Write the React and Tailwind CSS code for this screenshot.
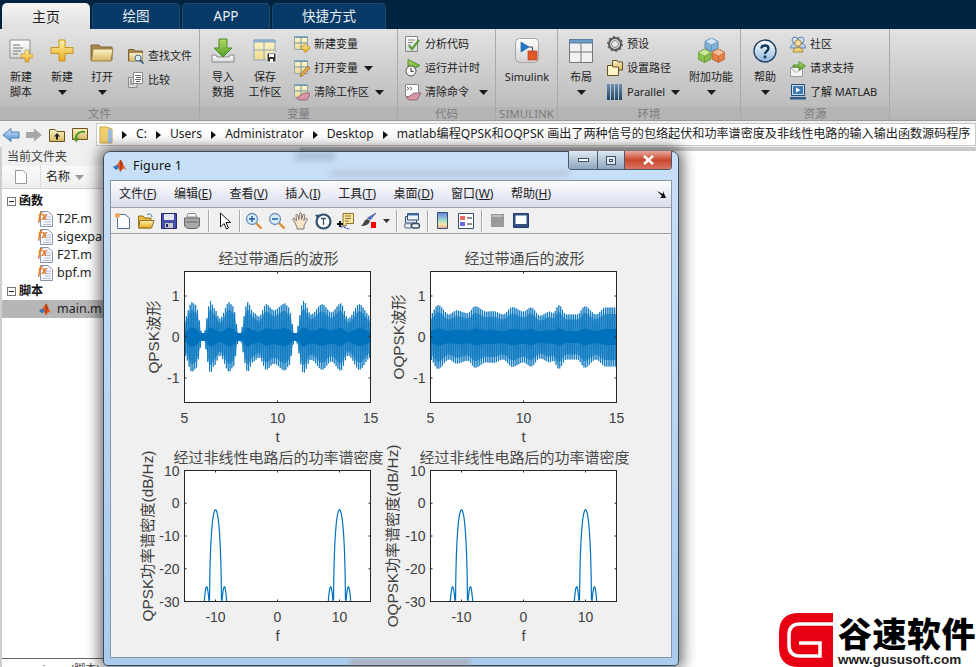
import React from "react";

// shared bits of the MATLAB desktop
const Caret = ({ className = "" }) => (
  <svg width="9" height="5" viewBox="0 0 9 5" className={className}><path d="M0 0H9L4.5 5Z" fill="#1a1a1a" /></svg>
);

const Crumb = () => (
  <svg width="5" height="8" viewBox="0 0 5 8" className="mx-[9px] shrink-0"><path d="M0 0L5 4L0 8Z" fill="#111" /></svg>
);

const Grad = ({ id, a, b }) => (
  <linearGradient id={id} x1="0" y1="0" x2="0" y2="1"><stop offset="0" stopColor={a} /><stop offset="1" stopColor={b} /></linearGradient>
);

const Defs = () => (
  <svg width="0" height="0" className="absolute">
    <defs>
      <Grad id="gYellow" a="#fff3a8" b="#eaa81f" />
      <Grad id="gFolder" a="#fdf3c4" b="#d9b765" />
      <Grad id="gPage" a="#ffffff" b="#d5d8dc" />
      <Grad id="gGreen" a="#b6dd62" b="#4f9a28" />
      <Grad id="gBlue" a="#cfe3fa" b="#4f8fd0" />
      <Grad id="gTile" a="#ffffff" b="#d2d2d2" />
      <Grad id="gCell" a="#fff6c9" b="#f1dc8c" />
      <Grad id="gHelp" a="#ffffff" b="#8fb7dc" />
      <Grad id="gBars" a="#6f8fb0" b="#1f4468" />
    </defs>
  </svg>
);

const NewScript = () => (
  <svg width="24" height="24" viewBox="0 0 24 24">
    <path d="M1 1H21V19H1Z" fill="url(#gPage)" stroke="#8d8d8d" />
    <path d="M4 6H11M4 9H14M4 12H12M4 15H9" stroke="#777" />
    <path d="M16 11H20V15H24V19H20V23H16V19H12V15H16Z" fill="url(#gYellow)" stroke="#b98a1a" strokeWidth=".6" />
  </svg>
);
const BigPlus = () => (
  <svg width="24" height="24" viewBox="0 0 24 24">
    <path d="M9 1H15V8.500H23V14.500H15V22H9V14.500H1V8.500H9Z" fill="url(#gYellow)" stroke="#c79518" />
  </svg>
);
const BigFolder = () => (
  <svg width="24" height="20" viewBox="0 0 24 20">
    <path d="M1 2H9L11 4H22V17H1Z" fill="#a8864f" stroke="#7d6536" />
    <path d="M3 6H23L21 18H1.500Z" fill="url(#gFolder)" stroke="#9b8146" />
  </svg>
);
const FindFile = () => (
  <svg width="16" height="16" viewBox="0 0 16 16">
    <path d="M.500 1.500H6L7.500 3H14.500V13H.500Z" fill="#a8864f" stroke="#7d6536" />
    <path d="M1.500 5H14.500V13H1.500Z" fill="url(#gFolder)" />
    <circle cx="10" cy="10" r="3" fill="#dcecf9" stroke="#3c6f9c" />
    <path d="M12 12L15.500 15.500" stroke="#1f4d78" strokeWidth="1.500" />
  </svg>
);
const Compare = () => (
  <svg width="16" height="16" viewBox="0 0 16 16">
    <path d="M.500 5.500H9V15.500H.500Z" fill="#ddd" stroke="#888" />
    <path d="M5.500.500H14.500V11.500H5.500Z" fill="#fff" stroke="#888" />
    <path d="M7 3.500H13M8 5.500H13M7 7.500H13M8 9.500H12M2 8H4M2 10H4M2 12H6" stroke="#666" />
  </svg>
);
const ImportData = () => (
  <svg width="24" height="25" viewBox="0 0 24 25">
    <path d="M1 17H5L6 19H18L19 17H23V24H1Z" fill="url(#gPage)" stroke="#888" />
    <path d="M8 1H16V10H21L12 19L3 10H8Z" fill="url(#gGreen)" stroke="#4a8a2a" />
  </svg>
);
const SaveWs = () => (
  <svg width="24" height="24" viewBox="0 0 24 24">
    <path d="M1 1H22V21H1Z" fill="url(#gCell)" stroke="#8aa8c0" />
    <path d="M1 1H22V3H1ZM11 1V21M1 11H22" stroke="#8aa8c0" fill="#8fb4d4" />
    <path d="M14 14H23V23H14Z" fill="#333" stroke="#f5f5f5" />
    <path d="M16 15H21V18H16ZM17 20H20V23H17Z" fill="#fff" />
  </svg>
);
const VarGrid = ({ children }) => (
  <svg width="16" height="17" viewBox="0 0 16 17">
    <path d="M.500.500H13.500V13.500H.500Z" fill="url(#gCell)" stroke="#8aa8c0" />
    <path d="M.500 1.500H13.500M7 .500V13.500M.500 7H13.500" stroke="#6c93b5" />
    {children}
  </svg>
);
const NewVar = () => (
  <VarGrid><path d="M10 8H13V10.500H15.500V13.500H13V16H10V13.500H7.500V10.500H10Z" fill="url(#gYellow)" stroke="#b98a1a" strokeWidth=".6" /></VarGrid>
);
const OpenVar = () => (
  <VarGrid><path d="M14 6L16 8L9 15.500L6 16.500L7 13.500Z" fill="#e8a94a" stroke="#8a5a20" strokeWidth=".7" /></VarGrid>
);
const Eraser = () => <path d="M9 7H16L12 14H4L1.500 12Z" fill="#d994a6" stroke="#8b5a68" strokeWidth=".8" />;
const ClearWs = () => (
  <VarGrid><g transform="translate(1 2)"><Eraser /></g></VarGrid>
);
const Analyze = () => (
  <svg width="16" height="17" viewBox="0 0 16 17">
    <path d="M.500.500H12.500V15.500H.500Z" fill="url(#gPage)" stroke="#888" />
    <path d="M3 4H10M3 6.500H8M3 9H6" stroke="#888" />
    <path d="M4 10L7 13L14 4" fill="none" stroke="#5a9e36" strokeWidth="2.200" />
  </svg>
);
const RunTime = () => (
  <svg width="16" height="18" viewBox="0 0 16 18">
    <path d="M3 .500L15 6.500L3 12.500Z" fill="url(#gGreen)" stroke="#4a8a2a" />
    <circle cx="6" cy="12" r="5" fill="#f5f5f5" stroke="#555" />
    <path d="M6 9V12.500H8.500" fill="none" stroke="#333" />
  </svg>
);
const ClearCmd = () => (
  <svg width="16" height="17" viewBox="0 0 16 17">
    <path d="M.500.500H13.500V12.500H.500Z" fill="#fff" stroke="#888" />
    <path d="M2 3L4 4.500L2 6M5 3L7 4.500L5 6" fill="none" stroke="#333" strokeWidth=".8" />
    <g transform="translate(0 2)"><Eraser /></g>
  </svg>
);
const SimulinkIcon = () => (
  <svg width="24" height="25" viewBox="0 0 24 25">
    <rect x=".500" y=".500" width="23" height="24" rx="4" fill="url(#gTile)" stroke="#a5a5a5" />
    <path d="M6 4L14 9L6 14Z" fill="#1f78c8" stroke="#175a96" strokeWidth=".6" />
    <path d="M14 9H17.500V13" fill="none" stroke="#444" />
    <rect x="13" y="13" width="9" height="9" fill="#e2572a" stroke="#a83b18" strokeWidth=".6" />
  </svg>
);
const LayoutIcon = () => (
  <svg width="24" height="24" viewBox="0 0 24 24">
    <path d="M.500.500H23.500V23.500H.500Z" fill="#f2f2f2" stroke="#777" />
    <path d="M.500.500H23.500V4H.500Z" fill="#6d9cc6" stroke="#5a7f9f" />
    <path d="M12 4V23.500M.500 13H23.500" stroke="#777" />
  </svg>
);
const Gear = () => (
  <svg width="16" height="16" viewBox="0 0 16 16">
    <circle cx="8" cy="8" r="6" fill="none" stroke="#555" strokeWidth="2" />
    <circle cx="8" cy="8" r="7" fill="none" stroke="#666" strokeWidth="2" strokeDasharray="2 2.400" />
    <circle cx="8" cy="8" r="3.500" fill="#e8e8e8" stroke="#888" />
  </svg>
);
const PathFolder = () => (
  <svg width="16" height="16" viewBox="0 0 16 16">
    <path d="M5.500.500H10L11 2H15.500V10H5.500Z" fill="url(#gFolder)" stroke="#6a5520" />
    <path d="M.500 5.500H5L6 7H11.500V15.500H.500Z" fill="#fff6cc" stroke="#6a5520" />
  </svg>
);
const ParallelIcon = () => (
  <svg width="16" height="16" viewBox="0 0 16 16">
    <path d="M0 0H3V16H0ZM4 0H7V16H4ZM8 0H11V16H8ZM12 0H15V16H12Z" fill="url(#gBars)" />
  </svg>
);
const Cube = ({ x, y, top, side, dark }) => (
  <g transform={`translate(${x} ${y})`}>
    <path d="M6.500 0L13 3.500V10L6.500 13.500L0 10V3.500Z" fill={side} stroke={dark} strokeWidth=".8" />
    <path d="M6.500 0L13 3.500L6.500 7L0 3.500Z" fill={top} stroke={dark} strokeWidth=".5" />
    <path d="M6.500 7V13.500" stroke={dark} strokeWidth=".5" />
  </g>
);
const Cubes = () => (
  <svg width="27" height="25" viewBox="0 0 27 25">
    <Cube x="7" y="0" top="#cfe4f5" side="#7fb2d9" dark="#4b7fa8" />
    <Cube x="0" y="11" top="#cde89a" side="#86c04a" dark="#5a8a2a" />
    <Cube x="14" y="11" top="#f6bd9a" side="#e57f45" dark="#b05a28" />
  </svg>
);
const HelpIcon = () => (
  <svg width="24" height="24" viewBox="0 0 24 24">
    <circle cx="12" cy="12" r="11" fill="url(#gHelp)" stroke="#1e3f60" strokeWidth="1.300" />
    <path d="M8.500 9.500C8.500 5.500 15.500 5.500 15.500 9.500C15.500 12 12 12 12 15" fill="none" stroke="#143a5e" strokeWidth="2.400" />
    <rect x="10.700" y="16.500" width="2.600" height="2.800" fill="#143a5e" />
  </svg>
);
const Community = () => (
  <svg width="16" height="17" viewBox="0 0 16 17">
    <circle cx="5" cy="4" r="3" fill="#cfe0f3" stroke="#5d84ad" />
    <circle cx="11" cy="4" r="3" fill="#cfe0f3" stroke="#5d84ad" />
    <path d="M.500 12C.500 7 7 7 7 8L7 12ZM9 8C11 7 15.500 7 15.500 12H9Z" fill="#b8d0ea" stroke="#5d84ad" />
    <circle cx="8" cy="7" r="3.200" fill="#f4dfa4" stroke="#a88b3a" />
    <path d="M3 16C3 10 13 10 13 16Z" fill="#f0d27a" stroke="#a88b3a" />
  </svg>
);
const Request = () => (
  <svg width="16" height="17" viewBox="0 0 16 17">
    <path d="M.500 7.500H12.500V16.500H.500Z" fill="#f4f4f4" stroke="#999" />
    <path d="M.500 7.500L6.500 12.500L12.500 7.500" fill="none" stroke="#aaa" />
    <path d="M3 7V5H9V1.500L15.500 6L9 10.500V7Z" fill="url(#gGreen)" stroke="#4a8a2a" strokeWidth=".8" />
  </svg>
);
const Learn = () => (
  <svg width="16" height="16" viewBox="0 0 16 16">
    <path d="M1.500.500H14.500V11.500H1.500Z" fill="#cfe0f1" stroke="#1f4d78" />
    <path d="M3 2H13V10H3Z" fill="#3d78b0" />
    <path d="M6 3.500L10.500 6L6 8.500Z" fill="#fff" />
    <path d="M0 13H16V15.500H0Z" fill="#2b5f90" />
  </svg>
);

const BigBtn = ({ w, icon, lines = [], caret }) => (
  <div className={`${w} shrink-0 flex flex-col items-center pt-2`}>
    <div className="h-[26px] flex items-end justify-center">{icon}</div>
    <div className="mt-[6px] flex flex-col items-center text-[11px] leading-[15px] text-[#222] whitespace-nowrap">
      {lines.map((l) => <div key={l}>{l}</div>)}
      {caret && <div className="h-[16px] flex items-center"><Caret /></div>}
    </div>
  </div>
);

const SmallBtn = ({ icon, label, caret, gap = "ml-[6px]", w = "w-[16px]" }) => (
  <div className="h-6 flex items-center whitespace-nowrap text-[11px] text-[#222]">
    <div className={`${w} flex justify-center shrink-0`}>{icon}</div>
    <span className="ml-1">{label}</span>
    {caret && <Caret className={gap} />}
  </div>
);

const Group = ({ w, label, children }) => (
  <div className={`${w} shrink-0 flex flex-col border-r border-[#a9a9a9]`}>
    <div className="h-[78px] flex">{children}</div>
    <div className="h-[13px] bg-[#b5b5b5] flex items-center justify-center text-[11.5px] leading-[13px] text-[#7c7c7c]">{label}</div>
  </div>
);

const Tab = ({ w, label, active }) => (
  <div className={active
    ? `${w} h-[26px] rounded-t-[5px] bg-gradient-to-b from-[#f4f4f4] to-[#dfdfdf] text-[#222] flex items-center justify-center text-[14px]`
    : `${w} h-[26px] rounded-t-[5px] border border-b-0 border-[#1d4d77] bg-[#073a66] text-[#e8eef4] flex items-center justify-center text-[13.500px]`}>
    {label}
  </div>
);

const Ribbon = () => (
  <>
    <div className="h-[29px] shrink-0 bg-[#00233f] flex items-end pl-[2px] gap-[2px]">
      <Tab w="w-[88px]" label="主页" active />
      <Tab w="w-[88px]" label="绘图" />
      <Tab w="w-[88px]" label="APP" />
      <Tab w="w-[114px]" label="快捷方式" />
    </div>
    <div className="h-[92px] shrink-0 flex bg-gradient-to-b from-[#e2e2e2] to-[#b6b6b6] border-b border-[#9a9a9a]">
      <Group w="w-[200px]" label="文件">
        <BigBtn w="w-[42px]" icon={<NewScript />} lines={["新建", "脚本"]} />
        <BigBtn w="w-[40px]" icon={<BigPlus />} lines={["新建"]} caret />
        <BigBtn w="w-[40px]" icon={<BigFolder />} lines={["打开"]} caret />
        <div className="ml-[6px] pt-[15px]">
          <SmallBtn icon={<FindFile />} label="查找文件" />
          <SmallBtn icon={<Compare />} label="比较" />
        </div>
      </Group>
      <Group w="w-[198px]" label="变量">
        <BigBtn w="w-[46px]" icon={<ImportData />} lines={["导入", "数据"]} />
        <BigBtn w="w-[38px]" icon={<SaveWs />} lines={["保存", "工作区"]} />
        <div className="ml-[10px] pt-[3px]">
          <SmallBtn icon={<NewVar />} label="新建变量" />
          <SmallBtn icon={<OpenVar />} label="打开变量" caret />
          <SmallBtn icon={<ClearWs />} label="清除工作区" caret />
        </div>
      </Group>
      <Group w="w-[98px]" label="代码">
        <div className="ml-[7px] pt-[3px]">
          <SmallBtn icon={<Analyze />} label="分析代码" />
          <SmallBtn icon={<RunTime />} label="运行并计时" />
          <SmallBtn icon={<ClearCmd />} label="清除命令" gap="ml-[10px]" caret />
        </div>
      </Group>
      <Group w="w-[62px]" label="SIMULINK">
        <BigBtn w="w-[62px]" icon={<SimulinkIcon />} lines={["Simulink"]} />
      </Group>
      <Group w="w-[183px]" label="环境">
        <BigBtn w="w-[46px]" icon={<LayoutIcon />} lines={["布局"]} caret />
        <div className="ml-[3px] w-[78px] pt-[3px]">
          <SmallBtn icon={<Gear />} label="预设" />
          <SmallBtn icon={<PathFolder />} label="设置路径" />
          <SmallBtn icon={<ParallelIcon />} label="Parallel" caret />
        </div>
        <BigBtn w="w-[52px]" icon={<Cubes />} lines={["附加功能"]} caret />
      </Group>
      <Group w="w-[149px]" label="资源">
        <BigBtn w="w-[48px]" icon={<HelpIcon />} lines={["帮助"]} caret />
        <div className="ml-[1px] pt-[3px]">
          <SmallBtn icon={<Community />} label="社区" />
          <SmallBtn icon={<Request />} label="请求支持" />
          <SmallBtn icon={<Learn />} label="了解 MATLAB" />
        </div>
      </Group>
    </div>
  </>
);

const AddressBar = () => (
  <div className="h-[26px] shrink-0 bg-[#f0f0f0] flex items-center pt-px">
    <div className="w-[96px] flex items-center shrink-0">
      <svg width="96" height="18" viewBox="0 0 96 18">
        <path d="M3 9L11 2.500V6H19V12H11V15.500Z" fill="url(#gBlue)" stroke="#4f7fb0" />
        <path d="M42 9L34 2.500V6H26V12H34V15.500Z" fill="#a8a8a8" />
        <path d="M49.500 3.500H55L57 5.500H64.500V15.500H49.500Z" fill="url(#gFolder)" stroke="#6a5520" />
        <path d="M57 7L60 10.500H58V13.500H56V10.500H54Z" fill="#222" />
        <path d="M72.500 2.500H87.500V13.500H72.500Z" fill="url(#gFolder)" stroke="#6a5520" />
        <path d="M85 7C81 6 77 8 77 12L79.500 10.500L76.500 16.500L73 12.500L75 12C75 7 80 3.500 85 5Z" fill="#4f9a28" />
      </svg>
    </div>
    <div className="flex-1 h-[23px] bg-white border border-[#c9c9c9] flex items-center text-[12.100px] text-[#222] whitespace-nowrap overflow-hidden pl-[2px]">
      <svg width="14" height="18" viewBox="0 0 14 18" className="shrink-0">
        <path d="M1 1H8L13 3V17H1Z" fill="#f1cf6e" stroke="#c9a441" />
        <path d="M9 2V17H13V4Z" fill="#9dbfe0" />
      </svg>
      <Crumb /><span>C:</span>
      <Crumb /><span>Users</span>
      <Crumb /><span>Administrator</span>
      <Crumb /><span>Desktop</span>
      <Crumb /><span>matlab编程QPSK和OQPSK 画出了两种信号的包络起伏和功率谱密度及非线性电路的输入输出函数源码程序</span>
    </div>
  </div>
);

const FxFile = () => (
  <svg width="15" height="16" viewBox="0 0 15 16">
    <path d="M2.500.500H10L14.500 4.500V15.500H2.500Z" fill="#f6f8fb" stroke="#8a93a8" />
    <path d="M7 6H13M7 8.500H13M7 11H13M5 13.500H13" stroke="#b4bccd" />
    <text x="0" y="9" className="text-[10px] italic font-bold" fill="#e0761d">fx</text>
  </svg>
);

const MatlabLogo = ({ size = 16 }) => (
  <svg width={size} height={size} viewBox="0 0 16 16">
    <path d="M1 9L5 7L8 2C9 1 10 4 11 6C12 9 14 11 15 12C13 11 12 10 11 11L8 14C7 11 6 9 5 8Z" fill="#dc5b1d" />
    <path d="M1 9L5 7L7 10L4 12Z" fill="#2c78c5" />
    <path d="M8 2C9 1 10 4 11 6L8 14C8 9 8 6 8 2Z" fill="#b53a1a" />
  </svg>
);

const TreeHead = ({ label }) => (
  <div className="h-[18px] flex items-center pl-[5px] text-[12px] font-bold text-[#111]">
    <span className="w-[9px] h-[9px] border border-[#777] flex items-center justify-center mr-[3px] bg-white">
      <span className="w-[5px] h-px bg-[#222]" />
    </span>
    {label}
  </div>
);

const TreeFile = ({ label, selected, icon }) => (
  <div className={`h-[18px] flex items-center pl-[36px] text-[12.5px] text-[#222] whitespace-nowrap ${selected ? "bg-[#b6b6b6]" : ""}`}>
    <span className="w-[15px] h-4 flex items-center mr-1">{icon}</span>
    {label}
  </div>
);

const FilePanel = () => (
  <div className="w-[300px] shrink-0 flex flex-col border-l-2 border-[#cfcfcf] overflow-hidden">
    <div className="h-[19px] shrink-0 bg-[#f0f0f0] flex items-center pl-[5px] text-[12px] text-[#444]">当前文件夹</div>
    <div className="h-[23px] shrink-0 bg-gradient-to-b from-[#fafafa] to-[#eeeeee] border-b border-[#d0d0d0] flex items-center text-[12px] text-[#222]">
      <div className="w-[39px] h-full flex items-center justify-center border-r border-[#dcdcdc]">
        <svg width="12" height="14" viewBox="0 0 12 14"><path d="M.500.500H8L11.500 4V13.500H.500Z" fill="#fff" stroke="#999" /></svg>
      </div>
      <span className="ml-[5px]">名称</span>
      <svg width="9" height="5" viewBox="0 0 9 5" className="ml-[5px]"><path d="M0 0H9L4.500 5Z" fill="#999" /></svg>
    </div>
    <div className="flex-1 bg-white pt-[3px]">
      <TreeHead label="函数" />
      <TreeFile label="T2F.m" icon={<FxFile />} />
      <TreeFile label="sigexpa" icon={<FxFile />} />
      <TreeFile label="F2T.m" icon={<FxFile />} />
      <TreeFile label="bpf.m" icon={<FxFile />} />
      <TreeHead label="脚本" />
      <TreeFile label="main.m" selected icon={<MatlabLogo size={15} />} />
    </div>
    <div className="h-[9px] shrink-0 border-t border-[#666] bg-white text-[11px] leading-[14px] pl-[24px] pt-[3px] text-[#444] whitespace-pre overflow-hidden">main.m  (脚本)</div>
  </div>
);

// signal data for the two waveforms, envelope knots read off the plot
const interp = (pts, t) => {
  for (let i = 0; i < pts.length - 1; i++) {
    const [a, va] = pts[i], [b, vb] = pts[i + 1];
    if (t >= a && t <= b) {
      const u = (t - a) / (b - a), s = u * u * (3 - 2 * u);
      return va + (vb - va) * s;
    }
  }
  return 0;
};
const qpskEnv = [[5,.45],[5.4,.85],[5.6,.78],[6,.03],[6.4,.88],[6.6,.7],[6.9,.45],[7.4,.85],[7.6,.75],[7.95,.03],[8.4,.85],[8.7,.6],[9,.5],[9.4,.8],[9.8,.65],[10.4,.82],[10.6,.72],[10.95,.05],[11.4,.88],[11.8,.55],[12.4,.8],[12.9,.6],[13.4,.82],[13.8,.45],[14.4,.8],[15,.5]];
const oqpskEnv = [[5,.55],[5.4,.78],[6,.55],[6.4,.65],[7,.58],[7.4,.75],[8,.62],[8.4,.63],[8.9,.55],[9.4,.73],[10,.62],[10.4,.72],[10.9,.52],[11.4,.62],[11.6,.58],[11.9,.78],[12.3,.55],[12.9,.55],[13.3,.75],[13.9,.55],[14.4,.72],[15,.72]];

const AX = { x: 54.5, y: 26.5, w: 186, h: 131 };
const waveY0 = (v) => AX.y + AX.h / 2 - (v / 1.6) * (AX.h / 2);

const wavePath = (env) => {
  let d = "";
  for (let i = 0; i <= 800; i++) {
    const t = 5 + i / 80;
    const v = interp(env, t) * Math.cos(2 * Math.PI * 10 * t);
    const px = AX.x + ((t - 5) / 10) * AX.w;
    d += `${i ? "L" : "M"}${px.toFixed(2)} ${waveY0(v).toFixed(2)}`;
  }
  return d;
};

// closed band around zero, k is the share of the envelope it fills
const bandPath = (env, k, floor = 0) => {
  let top = "", bottom = "";
  for (let i = 0; i <= 200; i++) {
    const t = 5 + i / 20;
    const a = Math.max(interp(env, t) * k, floor);
    const px = (AX.x + ((t - 5) / 10) * AX.w).toFixed(2);
    top += `${i ? "L" : "M"}${px} ${waveY0(a).toFixed(2)}`;
    bottom = `L${px} ${waveY0(-a).toFixed(2)}` + bottom;
  }
  return `${top}${bottom}Z`;
};

const psd = (f) => {
  const df = Math.abs(Math.abs(f) - 10);
  if (df < 1) {
    const s = df === 0 ? 1 : Math.sin(Math.PI * df) / (Math.PI * df);
    return -2 + 20 * Math.log10(Math.max(Math.abs(s), 1e-3));
  }
  if (df < 1.9) return -25.5 - 5 * ((df - 1.43) / 0.4) ** 2;
  return -60;
};
const psdPath = () => {
  let d = "", pen = false;
  for (let i = 0; i <= 3000; i++) {
    const f = -15 + i / 100;
    const v = psd(f);
    if (v < -31) { pen = false; continue; }
    const px = AX.x + ((f + 15) / 30) * AX.w;
    const py = AX.y + ((10 - v) / 40) * AX.h;
    d += `${pen ? "L" : "M"}${px.toFixed(2)} ${py.toFixed(2)}`;
    pen = true;
  }
  return d;
};

const Axes = ({ id, title, xlabel, ylabel, ylabelX, xticks, yticks, path, strokeW, env }) => (
  <svg width="247" height="199" viewBox="0 0 247 199" className="block overflow-visible [font-family:'Liberation_Sans','Noto_Sans_CJK_SC',sans-serif]">
    <defs><clipPath id={id}><rect x={AX.x} y={AX.y} width={AX.w} height={AX.h} /></clipPath></defs>
    <rect x={AX.x} y={AX.y} width={AX.w} height={AX.h} fill="#fff" />
    {env && <path d={bandPath(env, 0.78)} fill="#6fb1dd" />}
    <path d={path} fill="none" stroke="#0072bd" strokeWidth={strokeW} clipPath={`url(#${id})`} />
    {env && <path d={bandPath(env, 0.27, 0.1)} fill="#0072bd" />}
    <rect x={AX.x} y={AX.y} width={AX.w} height={AX.h} fill="none" stroke="#262626" />
    {xticks.map(([p, l]) => (
      <g key={l}>
        <path d={`M${p} ${AX.y}v2M${p} ${AX.y + AX.h}v-2`} stroke="#262626" />
        <text x={p} y={AX.y + AX.h + 20} textAnchor="middle" fontSize="14" fill="#404040">{l}</text>
      </g>
    ))}
    {yticks.map(([p, l]) => (
      <g key={l}>
        <path d={`M${AX.x} ${p}h2M${AX.x + AX.w} ${p}h-2`} stroke="#262626" />
        <text x={AX.x - 5} y={p + 5} textAnchor="end" fontSize="14" fill="#404040">{l}</text>
      </g>
    ))}
    <text x={AX.x + AX.w / 2 + 1} y={19} textAnchor="middle" fontSize="15" fill="#4a4a4a">{title}</text>
    <text x={AX.x + AX.w / 2} y={AX.y + AX.h + 39} textAnchor="middle" fontSize="15" fill="#404040">{xlabel}</text>
    <text transform={`translate(${ylabelX} ${AX.y + AX.h / 2}) rotate(-90)`} textAnchor="middle" fontSize="15.300" fill="#404040">{ylabel}</text>
  </svg>
);

const waveX = [[AX.x, "5"], [AX.x + AX.w / 2, "10"], [AX.x + AX.w, "15"]];
const waveY = [[AX.y + 24.5, "1"], [AX.y + 65.5, "0"], [AX.y + 106.5, "-1"]];
const psdX = [[AX.x + AX.w / 6, "-10"], [AX.x + AX.w / 2, "0"], [AX.x + (5 * AX.w) / 6, "10"]];
const psdY = [[AX.y, "10"], [AX.y + AX.h / 4, "0"], [AX.y + AX.h / 2, "-10"], [AX.y + (3 * AX.h) / 4, "-20"], [AX.y + AX.h, "-30"]];

const Tool = ({ children }) => <div className="w-[23px] flex justify-center shrink-0">{children}</div>;
const Sep = ({ w }) => (
  <div className={`${w} h-[22px] flex justify-center shrink-0`}><div className="w-px h-full bg-[#a8a8a8] shadow-[1px_0_0_#fff]" /></div>
);
const Ico = ({ children }) => <svg width="18" height="18" viewBox="0 0 18 18">{children}</svg>;
const Lens = ({ sign }) => (
  <>
    <path d="M10.500 10.500L16.500 16.500" stroke="#d98f2b" strokeWidth="2.400" />
    <circle cx="7" cy="7" r="5.500" fill="#d8ebfa" stroke="#6d93b5" strokeWidth="1.300" />
    <path d={sign ? "M4 7H10M7 4V10" : "M4 7H10"} stroke="#1f5f9c" strokeWidth="1.500" />
  </>
);

const MENU = [["文件", "F"], ["编辑", "E"], ["查看", "V"], ["插入", "I"], ["工具", "T"], ["桌面", "D"], ["窗口", "W"], ["帮助", "H"]];

const FigureWindow = () => (
  <div className="absolute left-[103px] top-[151px] w-[576px] h-[515px] rounded-t-[7px] rounded-b-[4px] border border-[#3d4a58] bg-gradient-to-b from-[#c8e0f7] to-[#a9cbee] shadow-[0_0_14px_4px_rgba(0,0,0,0.55)] flex flex-col px-[6px]">
    <div className="h-[28px] shrink-0 flex items-center relative text-[12.5px] text-[#111]">
      <span className="ml-[2px] mr-[5px]"><MatlabLogo /></span>
      <span className="tracking-[0.2px]">Figure 1</span>
      <div className="absolute top-[19px] left-[220px] w-[240px] h-[5px] bg-[#7b6f73]/25 blur-[3px]" />
      <div className="absolute top-0 left-[185px] w-[40px] h-[8px] bg-[#5b6b7a]/30 blur-[3px]" />
      <div className="absolute right-0 -top-px flex h-[19px] rounded-b-[4px] border border-t-0 border-[#4a5868] overflow-hidden">
        <div className="w-[29px] bg-gradient-to-b from-[#dfe9f3] to-[#8fa6bd] flex items-center justify-center border-r border-[#4a5868]">
          <div className="w-[11px] h-[4px] border border-[#3e5164] bg-white" />
        </div>
        <div className="w-[27px] bg-gradient-to-b from-[#dfe9f3] to-[#8fa6bd] flex items-center justify-center border-r border-[#4a5868]">
          <div className="w-[10px] h-[9px] border border-[#3e5164] bg-white/60 flex items-center justify-center"><div className="w-[4px] h-[3px] border border-[#3e5164]" /></div>
        </div>
        <div className="w-[46px] bg-gradient-to-b from-[#e8a79c] via-[#c9462f] to-[#d9735f] flex items-center justify-center">
          <svg width="11" height="10" viewBox="0 0 11 10"><path d="M1 1L10 9M10 1L1 9" stroke="#fff" strokeWidth="2.400" /></svg>
        </div>
      </div>
    </div>
    <div className="flex-1 min-h-0 border border-[#8a97a5] flex flex-col bg-[#f0f0f0]">
      <div className="h-[26px] shrink-0 bg-gradient-to-b from-[#fdfdfe] to-[#d9dcee] flex items-center pl-2 gap-[17.500px] text-[12px] text-[#222] relative">
        {MENU.map(([n, k]) => (
          <span key={k} className="whitespace-nowrap">{n}(<span className="underline">{k}</span>)</span>
        ))}
        <svg width="9" height="7" viewBox="0 0 9 7" className="absolute right-[5px] top-[10px]"><path d="M0 0L6 3V0L9 7H3L5 5Z" fill="#111" /></svg>
      </div>
      <div className="h-[27px] shrink-0 border-y border-[#a0a0a0] bg-[#f0f0f0] flex items-center">
        <Tool><Ico><path d="M3.500 2.500H11L15.500 6V16.500H3.500Z" fill="#fff" stroke="#4a6fa0" /><circle cx="3.500" cy="3.500" r="2.500" fill="#f2a65a" /></Ico></Tool>
        <Tool><Ico><path d="M1.500 4H6L8 6H14V16H1.500Z" fill="#e9b93f" stroke="#8f7325" /><path d="M3 8.500H17L14.500 16H1.500Z" fill="url(#gYellow)" stroke="#8f7325" /><path d="M10 3C12 1 15 2 15 5" fill="none" stroke="#3c74b5" /></Ico></Tool>
        <Tool><Ico><path d="M1.500 1.500H16.500V16.500H1.500Z" fill="#454fa8" stroke="#22286a" /><path d="M4 2H14V8H4Z" fill="#e4e6f5" /><path d="M5 11H13V16H5Z" fill="#c8c8c8" /><path d="M6 12H8V15H6Z" fill="#22286a" /></Ico></Tool>
        <Tool><Ico><path d="M5 1.500H12L14 5H4Z" fill="#fff" stroke="#888" /><path d="M1.500 6H16.500V13C16.500 15 14 16.500 12 16.500H6C4 16.500 1.500 15 1.500 13Z" fill="#a9a9a9" stroke="#666" /><path d="M3 10H15" stroke="#666" /></Ico></Tool>
        <Sep w="w-[10px]" />
        <Tool><Ico><path d="M4.500 1V15L8 11.500L10.500 17L12.500 16L10 10.500H14.500Z" fill="#fff" stroke="#111" /></Ico></Tool>
        <Sep w="w-[6px]" />
        <Tool><Ico><Lens sign /></Ico></Tool>
        <Tool><Ico><Lens /></Ico></Tool>
        <Tool><Ico><path d="M4 11L2 7.500C1.500 6 3 5.500 4 7L5.500 9L5 3.500C5 2 6.500 2 7 3.500L8 7.500L8.500 2C8.500 .500 10.500 .500 10.500 2L10.500 7.500L12 3C12.500 1.500 14 2 13.800 3.500L12.800 8.500L14.500 6.500C15.500 5.500 16.800 6.500 16 8L13 13.500V17H6V15Z" fill="#fbe3c8" stroke="#6d6d6d" strokeWidth=".9" /></Ico></Tool>
        <Tool><Ico><circle cx="9.500" cy="9.500" r="7" fill="#fff" stroke="#33506e" strokeWidth="2.200" /><path d="M1 3L5.500 2.500L4 7Z" fill="#33506e" /><path d="M7 6.500H12M9.500 6.500V13" stroke="#33506e" strokeWidth="1.300" /></Ico></Tool>
        <Tool><Ico><path d="M6 1.500H16.500V11.500H9V14H6Z" fill="#f5e6a4" stroke="#8f7325" /><path d="M8 4H14M8 6.500H14M8 9H12" stroke="#8f7325" /><path d="M0 12H6M3 9V15" stroke="#111" strokeWidth="2" /><path d="M4 15C8 14 8 17 13 17" fill="none" stroke="#1a1ad8" strokeDasharray="2 1" /></Ico></Tool>
        <Tool><Ico><path d="M16 1L10 8L7.500 6Z" fill="#5a6fd0" stroke="#33408c" strokeWidth=".6" /><path d="M7 7L10 9C9 13 5 14 1 14C4 12 3 9 7 7Z" fill="#444" /><path d="M11 10H16V16H11Z" fill="#f00" /></Ico></Tool>
        <div className="w-[12px] flex justify-center shrink-0"><svg width="7" height="4" viewBox="0 0 7 4"><path d="M0 0H7L3.500 4Z" fill="#333" /></svg></div>
        <Sep w="w-[8px]" />
        <Tool><Ico><path d="M2.500 4.500H13.500V11H2.500Z" fill="#dfe8f3" stroke="#33506e" /><path d="M4.500 1.500H15.500V8H4.500Z" fill="#eef3f9" stroke="#33506e" /><path d="M4.500 1.500H15.500V3.500H4.500Z" fill="#3f6ea0" /><rect x="1.500" y="11.500" width="7" height="4.500" rx="2.200" fill="none" stroke="#7d8fa3" strokeWidth="1.400" /><rect x="8.500" y="11.500" width="8" height="4.500" rx="2.200" fill="none" stroke="#33506e" strokeWidth="1.400" /></Ico></Tool>
        <Sep w="w-[8px]" />
        <Tool>
          <svg width="12" height="17" viewBox="0 0 12 17">
            <defs><linearGradient id="gBar" x1="0" y1="0" x2="0" y2="1"><stop offset="0" stopColor="#5f7fe0" /><stop offset=".5" stopColor="#a8e0d0" /><stop offset=".75" stopColor="#f5e6a0" /><stop offset="1" stopColor="#f2a0a0" /></linearGradient></defs>
            <path d="M.500.500H10.500V16.500H.500Z" fill="url(#gBar)" stroke="#33506e" />
          </svg>
        </Tool>
        <Tool><svg width="16" height="16" viewBox="0 0 16 16"><path d="M.500.500H15.500V15.500H.500Z" fill="#fff" stroke="#33506e" /><path d="M2 3H7V7H2Z" fill="#e86a6a" /><path d="M2 9H7V13H2Z" fill="#6a6ae8" /><path d="M9 5H14M9 11H14" stroke="#222" /></svg></Tool>
        <Sep w="w-[9px]" />
        <Tool><svg width="13" height="13" viewBox="0 0 13 13"><path d="M0 0H13V13H0Z" fill="#9a9a9a" /><path d="M1 1H12V3H1Z" fill="#bdbdbd" /></svg></Tool>
        <Tool><svg width="16" height="15" viewBox="0 0 16 15"><path d="M.500.500H15.500V14.500H.500Z" fill="#fff" stroke="#1f3f70" /><path d="M1 1H15V2.500H1ZM1 2.500H2.500V11H1ZM13.500 2.500H15V11H13.500ZM1 11H15V14H1Z" fill="#33507e" /></svg></Tool>
      </div>
      <div className="flex-1 min-h-0 pl-[19px] pt-[11px] grid grid-cols-[246.400px_246.400px] grid-rows-[199px_199px] content-start">
        <Axes id="c1" title="经过带通后的波形" xlabel="t" ylabel="QPSK波形" ylabelX={29} xticks={waveX} yticks={waveY} path={wavePath(qpskEnv)} strokeW={0.8} env={qpskEnv} />
        <Axes id="c2" title="经过带通后的波形" xlabel="t" ylabel="OQPSK波形" ylabelX={28} xticks={waveX} yticks={waveY} path={wavePath(oqpskEnv)} strokeW={0.8} env={oqpskEnv} />
        <Axes id="c3" title="经过非线性电路后的功率谱密度" xlabel="f" ylabel="QPSK功率谱密度(dB/Hz)" ylabelX={23} xticks={psdX} yticks={psdY} path={psdPath()} strokeW={1.2} />
        <Axes id="c4" title="经过非线性电路后的功率谱密度" xlabel="f" ylabel="OQPSK功率谱密度(dB/Hz)" ylabelX={22} xticks={psdX} yticks={psdY} path={psdPath()} strokeW={1.2} />
      </div>
    </div>
    <div className="h-[7px] shrink-0 relative">
      <div className="absolute left-[240px] top-[2px] w-[120px] h-[4px] bg-[#b5764a]/40 blur-[2px]" />
    </div>
  </div>
);

const Watermark = () => (
  <div className="absolute right-0 bottom-0 flex items-end bg-white">
    <svg width="54" height="54" viewBox="0 0 54 54">
      <path d="M54 0H20Q0 0 0 20V34Q0 54 20 54H54Z" fill="#e60012" />
      <path d="M54 11H21Q10 11 10 22V32Q10 43 21 43H41V30H20" fill="none" stroke="#fff" strokeWidth="3.500" />
    </svg>
    <div className="ml-[5px] w-[138px] flex flex-col">
      <div className="text-[34px] leading-[40px] font-black text-black [font-family:'Noto_Sans_CJK_SC',sans-serif] whitespace-nowrap tracking-[0.500px]">谷速软件</div>
      <div className="text-[13.500px] leading-[14px] font-bold text-[#222] [font-family:'Liberation_Sans',sans-serif] whitespace-nowrap">www.gususoft.com</div>
    </div>
  </div>
);

export default function App() {
  return (
    <div className="relative w-[976px] h-[667px] overflow-hidden bg-white flex flex-col [font-family:'Noto_Sans','Noto_Sans_CJK_SC',sans-serif]">
      <Defs />
      <Ribbon />
      <AddressBar />
      <div className="flex-1 min-h-0 flex">
        <FilePanel />
        <div className="flex-1 bg-white border-t-[4px] border-[#c9c9c9]" />
      </div>
      <FigureWindow />
      <Watermark />
    </div>
  );
}
